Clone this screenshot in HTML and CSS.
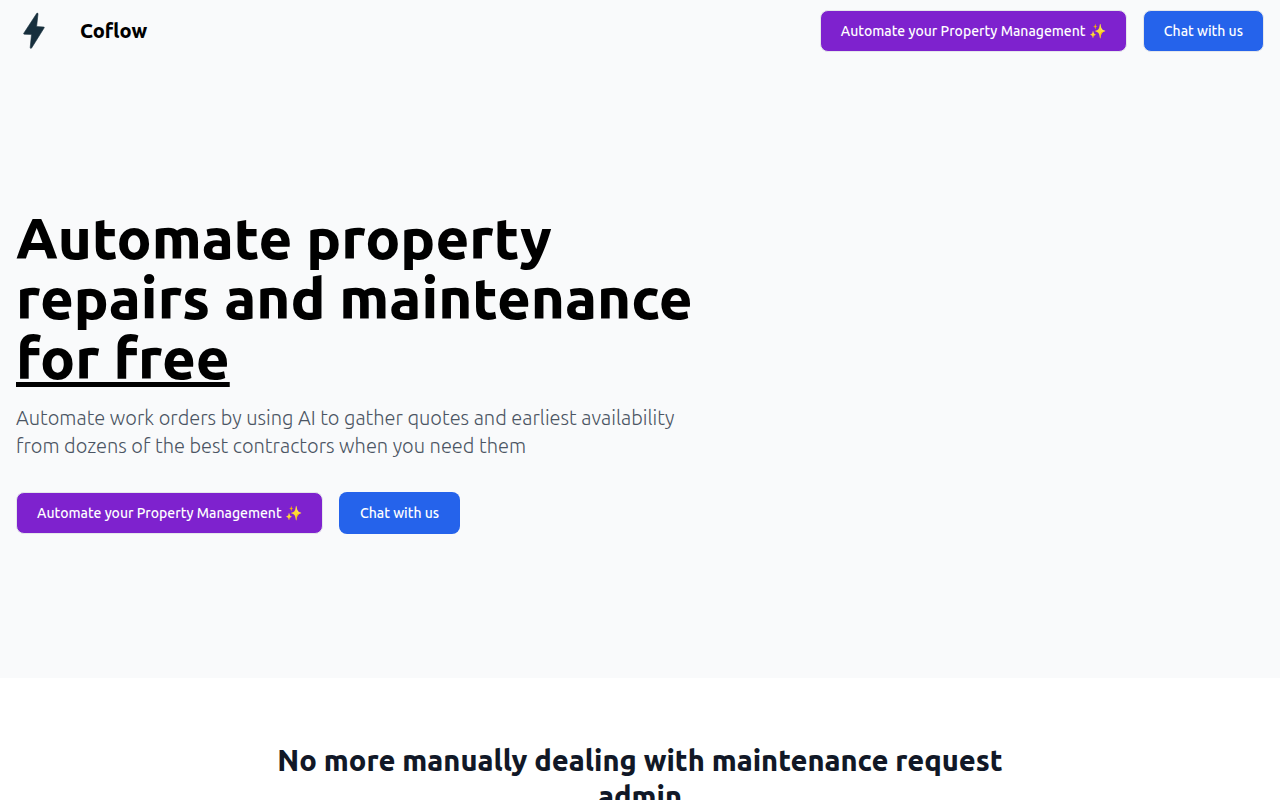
FILE: index.html
```html
<!DOCTYPE html>
<html lang="en">
<head>
  <meta charset="UTF-8">
  <meta name="viewport" content="width=device-width, initial-scale=1.0">
  <title>Coflow</title>
  <link rel="stylesheet" href="styles.css">
</head>
<body>

  <header class="navbar">
    <a class="brand" href="#">
      <svg class="brand-logo" viewBox="0 0 36 40" aria-hidden="true">
        <path d="M20.8 3.3 L7.8 23.2 Q7.3 24.2 8.3 24.2 L15.5 24.4 L14.2 37.5 Q14.5 39 15.6 38 L28.2 17.8 Q28.6 17 27.6 17 L20.6 16.6 L22 4 Q22 2.6 20.8 3.3 Z" transform="translate(0 -1)" fill="#172f3d" stroke="#172f3d" stroke-width="0.6" stroke-linejoin="round"/>
      </svg>
      <span>Coflow</span>
    </a>
    <nav class="actions">
      <a class="btn btn-purple" href="#automate">Automate your Property Management ✨</a>
      <a class="btn btn-blue btn-outlined" href="#chat">Chat with us</a>
    </nav>
  </header>

  <section class="hero">
    <div class="hero-content">
      <h1>Automate property repairs and maintenance <u>for free</u></h1>
      <p>Automate work orders by using AI to gather quotes and earliest availability from dozens of the best contractors when you need them</p>
      <div class="actions">
        <a class="btn btn-purple" href="#automate">Automate your Property Management ✨</a>
        <a class="btn btn-blue" href="#chat">Chat with us</a>
      </div>
    </div>
  </section>

  <section class="features">
    <h2>No more manually dealing with maintenance request admin</h2>
  </section>

</body>
</html>
```

FILE: styles.css
```css
* {
  box-sizing: border-box;
}
body {
  margin: 0;
  font-family: Ubuntu, "Noto Sans", sans-serif;
  background-color: #fff;
  color: #000;
}
h1, h2, p {
  margin: 0;
}
.navbar {
  display: flex;
  flex-wrap: wrap;
  align-items: center;
  justify-content: space-between;
  padding: 10px 16px;
  background-color: #f9fafb;
}
.brand {
  display: flex;
  align-items: center;
  gap: 28px;
  color: #000;
  font-size: 20px;
  font-weight: 800;
  line-height: 28px;
  text-decoration: none;
}
.brand-logo {
  width: 36px;
  height: 40px;
}
.actions {
  display: flex;
  flex-wrap: wrap;
  gap: 16px;
}
.btn {
  padding: 10px 20px;
  border: 1px solid transparent;
  border-radius: 8px;
  color: #fff;
  font-size: 14px;
  font-weight: 500;
  line-height: 20px;
  text-decoration: none;
}
.btn-purple {
  background-color: #7e22ce;
  border-color: #e5e7eb;
}
.btn-blue {
  background-color: #2563eb;
}
.btn-outlined {
  border-color: #e5e7eb;
}
.hero {
  padding: 146px 16px 144px;
  background-color: #f9fafb;
}
.hero-content {
  max-width: 692px;
}
.hero h1 {
  margin-bottom: 16px;
  font-size: 58px;
  font-weight: 800;
  line-height: 60px;
}
.hero p {
  margin-bottom: 32px;
  color: #4b5563;
  font-size: 20px;
  font-weight: 300;
  line-height: 28px;
}
.features {
  padding: 64px 16px;
}
.features h2 {
  max-width: 768px;
  margin: 0 auto;
  color: #111827;
  font-size: 29px;
  font-weight: 800;
  line-height: 36px;
  text-align: center;
}
```
